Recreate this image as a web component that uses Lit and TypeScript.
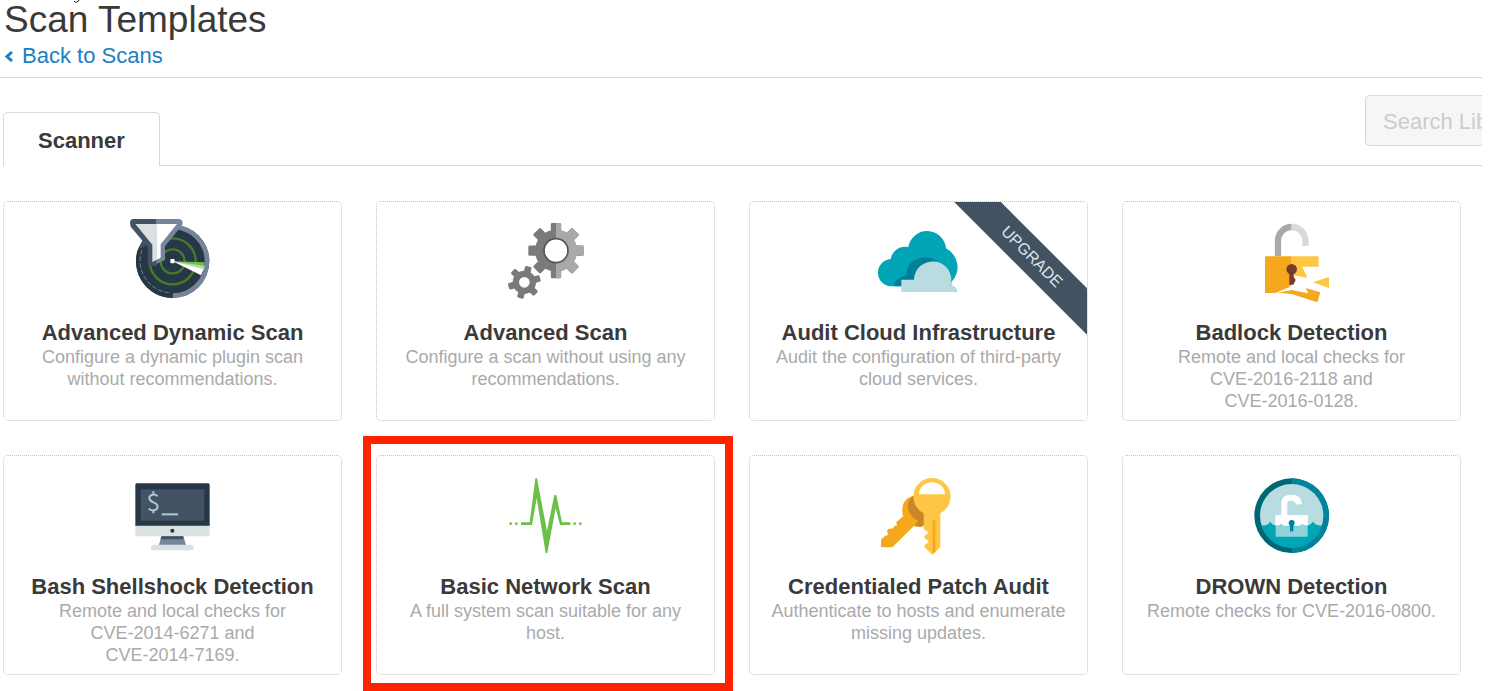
import { LitElement, html, svg, css, nothing, SVGTemplateResult } from "lit";
import { customElement } from "lit/decorators.js";
import { classMap } from "lit/directives/class-map.js";

interface Template {
  title: string;
  text: string;
  viewBox: string;
  icon: SVGTemplateResult;
  upgrade?: boolean;
  marked?: boolean;
}

// Teeth of a gear, one rounded bar per pair of opposite teeth.
const teeth = (cx: number, cy: number, r: number, width: number, pairs: number, start: number) =>
  Array.from({ length: pairs }, (_, i) => svg`<rect x=${cx - width / 2} y=${cy - r} width=${width} height=${r * 2} rx="4"
    transform="rotate(${start + (i * 180) / pairs} ${cx} ${cy})"></rect>`);

const radar = svg`
  <circle cx="188" cy="184" r="110" fill="#42515f"></circle>
  <path d="M188 74A110 110 0 0 1 188 294Z" fill="#76869a"></path>
  <circle cx="188" cy="184" r="96" fill="#263746"></circle>
  <path d="M188 278V294A110 110 0 0 1 84 148L100 140Z" fill="#263746"></path>
  <path d="M96 150A96 96 0 0 0 176 278" fill="none" stroke="#75838c" stroke-width="3" stroke-dasharray="14 6"></path>
  <g fill="none" stroke="#467b2b" stroke-width="7">
    <circle cx="188" cy="184" r="69"></circle><circle cx="188" cy="184" r="36"></circle>
  </g>
  <path d="M188 184L283 187L283 206L277 214Z" fill="#6cc04a"></path>
  <path d="M188 184L282 204L273 226Z" fill="#fff"></path>
  <path d="M188 184L284 198L281 208Z" fill="#b7dca6"></path>
  <rect x="181" y="177" width="13" height="13" rx="3" fill="#fff"></rect>
  <path d="M70 57H140V198L118 198Q113 198 113 190V141L62 80Q56 58 70 57Z" fill="#435265"></path>
  <path d="M139 57H208Q222 60 216 76L165 139V180L139 192Z" fill="#76869a"></path>
  <path d="M76 72H139V180L127 186V134Z" fill="#dbe1e3"></path>
  <path d="M139 72H201L152 133V173L139 180Z" fill="#fff"></path>`;

const gears = svg`
  <defs><clipPath id="gear-right"><rect x="198" y="50" width="100" height="200"></rect></clipPath></defs>
  <g fill="#7a7a7c">${teeth(198, 152, 83, 31, 4, 0)}<circle cx="198" cy="152" r="63"></circle></g>
  <g fill="#a9a9aa" clip-path="url(#gear-right)">${teeth(198, 152, 83, 31, 4, 0)}<circle cx="198" cy="152" r="63"></circle></g>
  <circle cx="198" cy="152" r="36" fill="#fff" stroke="#55555e" stroke-width="5"></circle>
  <g fill="#7a7a7c">${teeth(103, 247, 49, 20, 3, 15)}<circle cx="103" cy="247" r="35"></circle></g>
  <circle cx="103" cy="247" r="16" fill="#fff"></circle>`;

const cloud = svg`
  <path d="M98 274A41 41 0 0 1 92 192A44 44 0 0 1 145 156A57 57 0 0 1 258 160A64 64 0 0 1 274 262V274Z" fill="#00a6b6"></path>
  <path d="M103 274Q102 250 138 241Q142 190 196 187Q216 188 232 198L180 274Z" fill="#007f9b"></path>
  <path d="M124 291V254H162A56 56 0 1 1 272 270Q290 272 293 291Z" fill="#b9dce0"></path>`;

const badlock = svg`
  <path d="M114 139V93A41 41 0 0 1 155 51" fill="none" stroke="#a9a9aa" stroke-width="19"></path>
  <path d="M155 51A41 41 0 0 1 196 92V108" fill="none" stroke="#d9dad6" stroke-width="19"></path>
  <path d="M75 139H155V224L147 232L106 249H75Z" fill="#f6a81c"></path>
  <path d="M155 139H236V170H187L202 203L155 195Z" fill="#ffc646"></path>
  <circle cx="155" cy="178" r="16" fill="#763b2b"></circle>
  <path d="M148 184H161V200L167 210L160 224H148Z" fill="#763b2b"></path>
  <path d="M219 217L267 201V234Z" fill="#ffc646"></path>
  <path d="M112 248L155 240L205 250L197 234L241 247L232 277L155 252Z" fill="#f6a81c"></path>`;

const terminal = svg`
  <path d="M46 160H269V194Q269 199 264 199H51Q46 199 46 194Z" fill="#dbe1e3"></path>
  <path d="M50 40H265Q269 40 269 45V167H46V45Q46 40 50 40Z" fill="#263746"></path>
  <rect x="62" y="58" width="191" height="94" fill="#435265"></rect>
  <g fill="none" stroke="#a6cdd2" stroke-width="6">
    <path d="M113 79Q106 73 98 74Q88 76 88 84Q88 92 100 97Q113 102 113 110Q112 120 101 121Q92 122 86 116M100 64V75M100 120V130"></path>
    <path d="M125 133H174"></path>
  </g>
  <circle cx="157" cy="182" r="6" fill="#263746"></circle>
  <path d="M124 199H190L198 225H117Z" fill="#76869a"></path>
  <path d="M124 199H190V208H122Z" fill="#435265"></path>
  <rect x="93" y="224" width="128" height="17" rx="8" fill="#dbe1e3"></rect>`;

const pulse = svg`
  <path d="M93 172H119L136 40H141L171 198L193 90H199L216 172H241V180H210L197 129L172 264H167L140 100L126 180H93Z" fill="#6cc04a"></path>
  <g fill="#6cc04a"><circle cx="62" cy="176" r="4"></circle><circle cx="79" cy="176" r="4"></circle>
  <circle cx="254" cy="176" r="4"></circle><circle cx="271" cy="176" r="4"></circle></g>`;

const keys = svg`
  <path d="M146 92Q112 100 112 135Q111 146 115 154L94 171L96 181L87 184L84 190L70 192L66 198L69 209L59 214L48 224V247H82L147 183L178 160Z" fill="#f6a81c"></path>
  <path d="M145 92Q128 104 128 125Q134 158 160 167V186Q183 186 193 166L178 130Z" fill="#cb8627"></path>
  <path d="M147 183Q172 190 192 170L172 150Z" fill="#cb8627"></path>
  <path d="M201 39A56 56 0 0 1 226 145V246L203 270L178 246V241L192 230L178 218V213L188 206V200L176 192V145A56 56 0 0 1 201 39Z" fill="#ffc646"></path>
  <path d="M162 88A39 36 0 0 1 240 88Z" fill="#fff"></path>
  <rect x="203" y="166" width="8" height="96" fill="#f6a81c"></rect>`;

const drown = svg`
  <circle cx="155" cy="152" r="112" fill="#006674"></circle>
  <path d="M155 40A112 112 0 0 1 155 264Z" fill="#00849b"></path>
  <circle cx="155" cy="152" r="95" fill="#b9dce0"></circle>
  <path d="M133 152V113Q134 98 152 98Q176 97 177 118" fill="none" stroke="#fff" stroke-width="18"></path>
  <rect x="107" y="151" width="96" height="64" fill="#fff"></rect>
  <path d="M64 181Q80 184 91 170Q101 186 121 180Q136 186 155 180Q175 186 188 180Q206 186 219 170Q230 184 246 181A95 95 0 0 1 64 181Z" fill="#00a6b6"></path>
  <path d="M107 151H203V181Q194 185 187 172Q178 186 155 180Q136 186 123 172Q116 185 107 181Z" fill="#fff"></path>
  <path d="M107 181Q116 185 123 176Q136 188 155 182Q178 188 187 176Q194 185 203 181V215H107Z" fill="#8fd3da"></path>
  <circle cx="155" cy="174" r="9" fill="#007f9b"></circle>
  <rect x="150" y="178" width="10" height="21" fill="#007f9b"></rect>`;

const templates: Template[] = [
  { title: "Advanced Dynamic Scan", text: "Configure a dynamic plugin scan without recommendations.", viewBox: "36 27 303 300", icon: radar },
  { title: "Advanced Scan", text: "Configure a scan without using any recommendations.", viewBox: "15 27 303 300", icon: gears },
  { title: "Audit Cloud Infrastructure", text: "Audit the configuration of third-party cloud services.", viewBox: "24 42 303 300", icon: cloud, upgrade: true },
  { title: "Badlock Detection", text: "Remote and local checks for CVE\u20112016\u20112118 and CVE\u20112016\u20110128.", viewBox: "3 -3 303 300", icon: badlock },
  { title: "Bash Shellshock Detection", text: "Remote and local checks for CVE\u20112014\u20116271 and CVE\u20112014\u20117169.", viewBox: "6 -21 303 300", icon: terminal },
  { title: "Basic Network Scan", text: "A full system scan suitable for any host.", viewBox: "15 -6 303 300", icon: pulse, marked: true },
  { title: "Credentialed Patch Audit", text: "Authenticate to hosts and enumerate missing updates.", viewBox: "9 -6 303 300", icon: keys },
  { title: "DROWN Detection", text: "Remote checks for CVE\u20112016\u20110800.", viewBox: "3 -6 303 300", icon: drown },
];

@customElement("app-root")
export class AppRoot extends LitElement {
  static styles = css`
    :host {
      display: block;
      position: relative;
      margin-right: 8px;
      font-family: "Liberation Sans", Arial, sans-serif;
      color: #3a3a3a;
      background: #fff;
    }
    .squiggle {
      position: absolute;
      top: 0;
      left: 73px;
      width: 8px;
      height: 3px;
    }
    header {
      padding: 0 4px 8px;
      border-bottom: 1px solid #d9d9d9;
    }
    h1 {
      margin: 0 0 3px;
      font-size: 37px;
      line-height: 40px;
      font-weight: 400;
    }
    .back {
      display: inline-flex;
      align-items: center;
      gap: 8px;
      vertical-align: top;
      font-size: 22px;
      line-height: 26px;
      color: #1a80c4;
      text-decoration: none;
    }
    .chevron {
      width: 10px;
      height: 12px;
    }
    .toolbar {
      display: flex;
      align-items: flex-end;
      padding: 17px 0 0 3px;
    }
    .tab {
      box-sizing: border-box;
      padding: 15px 34px 13px;
      border: 1px solid #d9d9d9;
      border-bottom: 0;
      border-radius: 5px 5px 0 0;
      background: #fff;
      color: inherit;
      font: 700 22px/25px "Liberation Sans", Arial, sans-serif;
    }
    .search {
      flex: 1;
      display: flex;
      justify-content: flex-end;
      padding-bottom: 19px;
      border-bottom: 1px solid #d9d9d9;
      overflow: hidden;
    }
    .field {
      box-sizing: border-box;
      width: 300px;
      margin-right: -183px;
      padding: 12px 17px 10px;
      border: 1px solid #d9d9d9;
      border-radius: 4px;
      background: #f6f6f6;
      font: 400 22px/27px "Liberation Sans", Arial, sans-serif;
    }
    .field::placeholder {
      color: #ccc;
      opacity: 1;
    }
    .grid {
      display: grid;
      grid-template-columns: repeat(4, 1fr);
      grid-auto-rows: 1fr;
      gap: 34px;
      padding: 35px 21px 16px 3px;
    }
    .card {
      position: relative;
      display: flex;
      flex-direction: column;
      align-items: center;
      padding: 7px 19px 8px;
      border: 1px dotted #c4c4c4;
      border-radius: 5px;
      color: inherit;
      text-align: center;
      text-decoration: none;
    }
    .icon {
      width: 101px;
      height: 100px;
    }
    .title {
      margin: 11px 0 0;
      font-size: 22px;
      line-height: 26px;
      font-weight: 700;
    }
    .text {
      margin: 0;
      font-size: 18px;
      line-height: 22px;
      color: #aaa;
    }
    .marked::after {
      content: "";
      position: absolute;
      inset: -20px -19px -17px -14px;
      border: 8px solid #ff2200;
    }
    .corner {
      position: absolute;
      inset: 0;
      overflow: hidden;
    }
    .ribbon {
      position: absolute;
      top: 38px;
      right: -45px;
      width: 200px;
      transform: rotate(45deg);
      background: #435262;
      color: #dfe4e8;
      font-size: 16px;
      line-height: 33px;
    }
  `;

  private card(t: Template) {
    return html`<a href="#" class=${classMap({ card: true, marked: !!t.marked })}>
      <svg class="icon" viewBox=${t.viewBox} aria-hidden="true">${t.icon}</svg>
      <h2 class="title">${t.title}</h2>
      <p class="text">${t.text}</p>
      ${t.upgrade ? html`<span class="corner"><span class="ribbon">UPGRADE</span></span>` : nothing}
    </a>`;
  }

  render() {
    return html`
      <svg class="squiggle" viewBox="0 0 8 3" aria-hidden="true">
        <path d="M1 1Q2 3 4 2Q6 1 6 0" fill="none" stroke="#222"></path>
      </svg>
      <header>
        <h1>Scan Templates</h1>
        <a class="back" href="#">
          <svg class="chevron" viewBox="0 0 10 12" aria-hidden="true">
            <path d="M8 2L3 6.500L8 11" fill="none" stroke="currentColor" stroke-width="3"></path>
          </svg>Back to Scans</a>
      </header>
      <div class="toolbar">
        <button class="tab" type="button">Scanner</button>
        <div class="search">
          <input class="field" type="search" aria-label="Search Library" placeholder="Search Library" />
        </div>
      </div>
      <main class="grid">${templates.map((t) => this.card(t))}</main>
    `;
  }
}
